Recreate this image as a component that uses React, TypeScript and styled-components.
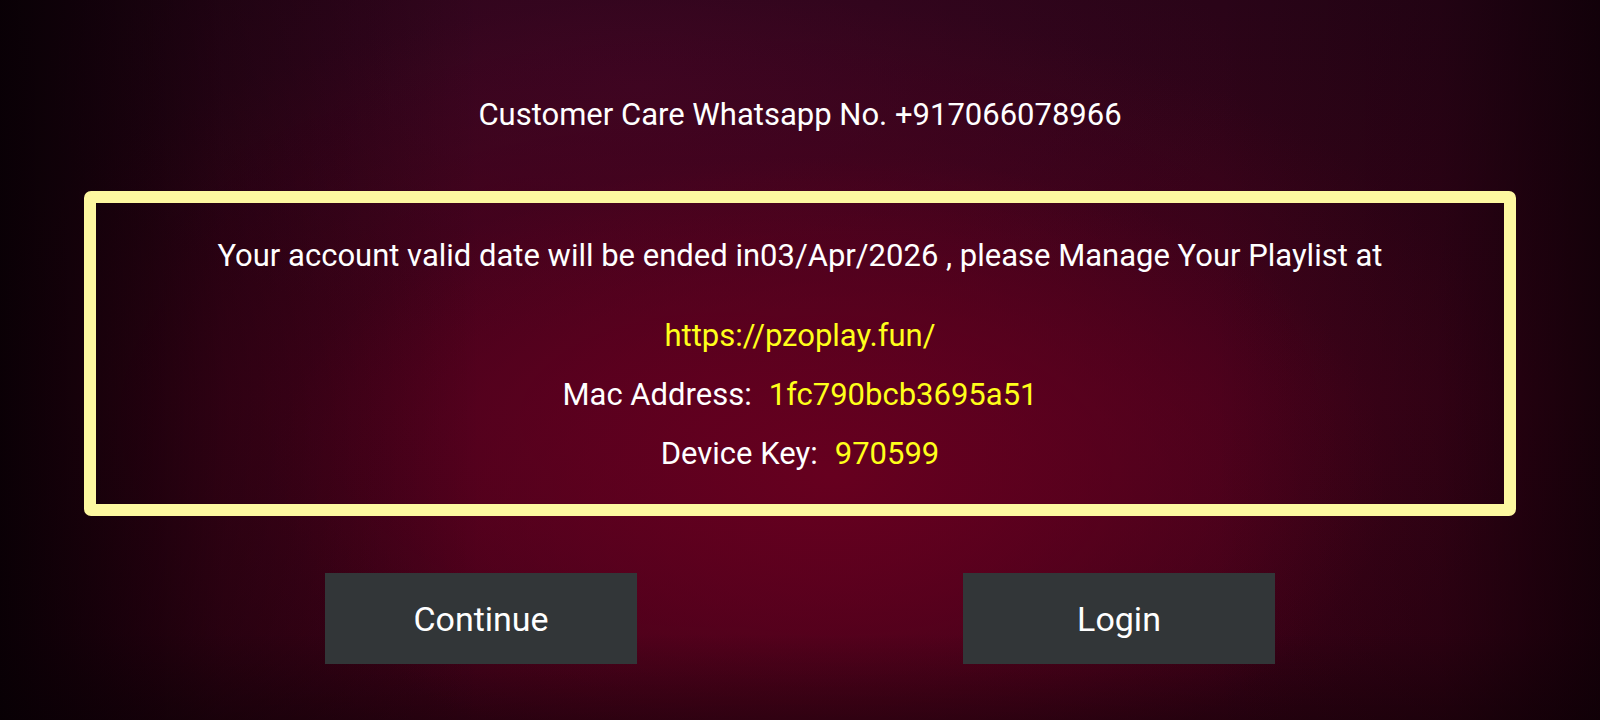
import styled, { createGlobalStyle } from 'styled-components'

const GlobalStyle = createGlobalStyle`
  html, body {
    margin: 0;
    padding: 0;
    background: #12010a;
  }
  * {
    box-sizing: border-box;
  }
`

export default function App() {
  return (
    <>
      <GlobalStyle />
      <Screen>
        <Support>Customer Care Whatsapp No. +917066078966</Support>
        <InfoBox>
          <Line $spaced>
            Your account valid date will be ended in03/Apr/2026 , please Manage Your Playlist at
          </Line>
          <Line><Value>https://pzoplay.fun/</Value></Line>
          <Line>Mac Address:<Value $lead>1fc790bcb3695a51</Value></Line>
          <Line>Device Key:<Value $lead>970599</Value></Line>
        </InfoBox>
        <Actions>
          <ActionButton>Continue</ActionButton>
          <ActionButton>Login</ActionButton>
        </Actions>
      </Screen>
    </>
  )
}

const Screen = styled.div`
  width: 1600px;
  height: 720px;
  overflow: hidden;
  display: flex;
  flex-direction: column;
  align-items: center;
  padding-top: 97px;
  font-family: Roboto, 'Liberation Sans', sans-serif;
  color: #fff;
  background:
    linear-gradient(90deg, rgba(6, 0, 4, 0.92) 0%, rgba(6, 0, 4, 0.35) 14%, rgba(6, 0, 4, 0) 30%),
    linear-gradient(270deg, rgba(10, 0, 5, 0.75) 0%, rgba(10, 0, 5, 0.25) 10%, rgba(10, 0, 5, 0) 24%),
    linear-gradient(0deg, rgba(8, 0, 4, 0.35) 0%, rgba(8, 0, 4, 0) 12%),
    radial-gradient(ellipse 560px 320px at 52% 66%, #66001f 0%, rgba(102, 0, 31, 0) 100%),
    radial-gradient(ellipse 800px 420px at 45% 58%, #52001e 0%, rgba(82, 0, 30, 0) 100%),
    radial-gradient(ellipse 600px 260px at 40% 12%, #3a0622 0%, rgba(58, 6, 34, 0) 100%),
    linear-gradient(180deg, #2a0418 0%, #3c0219 55%, #330114 100%);
`

const Support = styled.div`
  font-size: 31px;
  line-height: 36px;
  height: 36px;
`

const InfoBox = styled.div`
  margin-top: 58px;
  width: 1432px;
  height: 325px;
  border: 12px solid #fdf8a0;
  border-radius: 7px;
  display: flex;
  flex-direction: column;
  align-items: center;
  gap: 23px;
  padding-top: 35px;
`

const Line = styled.div<{ $spaced?: boolean }>`
  font-size: 31px;
  line-height: 36px;
  white-space: pre;
  ${({ $spaced }) => $spaced && `margin-bottom: 21px;`}
`

const Value = styled.span<{ $lead?: boolean }>`
  color: #ffff1a;
  ${({ $lead }) => $lead && `margin-left: 17px;`}
`

const Actions = styled.div`
  margin-top: 57px;
  display: flex;
  gap: 326px;
`

const ActionButton = styled.button`
  width: 312px;
  height: 91px;
  border: none;
  border-radius: 0;
  background: #323638;
  color: #fff;
  font-family: Roboto, 'Liberation Sans', sans-serif;
  font-size: 34px;
  padding: 0;
`
